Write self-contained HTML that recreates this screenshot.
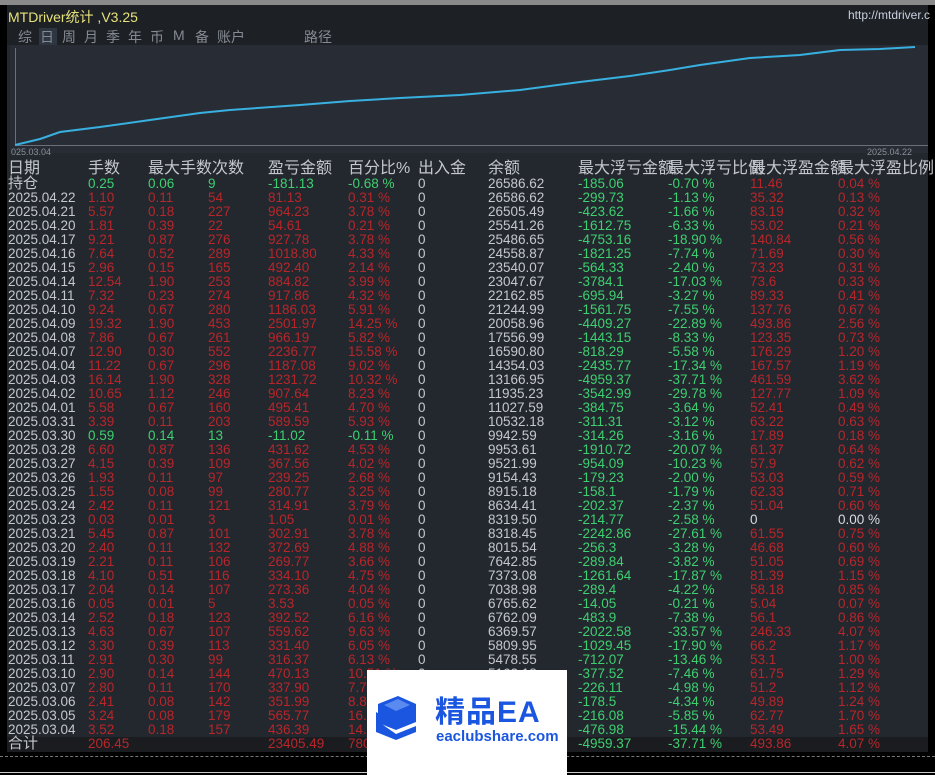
<!DOCTYPE html>
<html><head><meta charset="utf-8"><style>
*{margin:0;padding:0;box-sizing:border-box}
body{width:935px;height:775px;background:#000;position:relative;overflow:hidden;font-family:"Liberation Sans","Noto Sans CJK SC",sans-serif}
.abs{position:absolute}
#top{left:0;top:0;width:935px;height:5px;background:#8a8a8a}
#panel{left:7px;top:5px;width:921px;height:747px;background:#23272e}
#hdr{left:7px;top:5px;width:921px;height:40px;background:#1d2024}
#chart{left:10px;top:45px;width:918px;height:108px;background:#282d35}
.r{position:absolute;left:0;height:14px;line-height:14px;font-size:13.5px;white-space:nowrap;color:#c4c8ce}
.r span{position:absolute;top:0}
.a{left:8px}.b{left:88px}.c{left:148px}.d{left:208px}.e{left:268px}.f{left:348px}.g{left:418px}.h{left:488px}.i{left:578px}.j{left:668px}.k{left:750px}.l{left:838px}
.R .b,.R .c,.R .d,.R .e,.R .f{color:#b8262a}
.G .b,.G .c,.G .d,.G .e,.G .f{color:#3ed070}
.i,.j{color:#3ed070}
.k,.l{color:#b8262a}
.W .k,.W .l{color:#d8dce0}
.hd{color:#c4c8ce;font-size:16px}
.t{position:absolute;top:27px;color:#858b94;font-size:14px}
</style></head><body>
<div id="top" class="abs"></div>
<div id="panel" class="abs"></div>
<div id="hdr" class="abs"></div>
<div class="abs" style="left:8px;top:7px;color:#e6e27a;font-size:14px">MTDriver统计 ,V3.25</div>
<div class="abs" style="left:848px;top:8px;color:#c8d0e0;font-size:12px">http://mtdriver.c</div>
<div class="abs" style="left:39px;top:28px;width:18px;height:17px;background:#2e3642"></div>
<div class="t" style="left:18px">综</div><div class="t" style="left:40px">日</div><div class="t" style="left:62px">周</div><div class="t" style="left:84px">月</div><div class="t" style="left:106px">季</div><div class="t" style="left:128px">年</div><div class="t" style="left:150px">币</div><div class="t" style="left:173px">M</div><div class="t" style="left:195px">备</div><div class="t" style="left:217px">账户</div>
<div class="t" style="left:304px">路径</div>
<div id="chart" class="abs"></div>
<svg class="abs" style="left:0;top:0" width="935" height="160">
<line x1="15.5" y1="48" x2="15.5" y2="145" stroke="#6a7078" stroke-width="1"/>
<line x1="15" y1="145.5" x2="928" y2="145.5" stroke="#6a7078" stroke-width="1"/>
<polyline fill="none" stroke="#38b0e0" stroke-width="2" points="15,145 40,139 60,132 100,127 150,120 200,113 230,110 300,105 350,101 400,98 460,95 520,90 580,82 630,76 670,70 700,65 750,58 800,55 840,50 880,49 915,47"/>
</svg>
<div class="abs" style="left:11px;top:147px;color:#8a9098;font-size:9px">025.03.04</div>
<div class="abs" style="left:867px;top:147px;color:#8a9098;font-size:9px">2025.04.22</div>
<div class="abs" style="left:7px;top:737px;width:921px;height:15px;background:#1a1c20"></div>
<div class="r hd" style="top:162px"><span class="a">日期</span><span class="b">手数</span><span class="c">最大手数次数</span><span class="e">盈亏金额</span><span class="f">百分比%</span><span class="g">出入金</span><span class="h">余额</span><span class="i" style="color:#c4c8ce">最大浮亏金额</span><span class="j" style="color:#c4c8ce">最大浮亏比例</span><span class="k" style="color:#c4c8ce">最大浮盈金额</span><span class="l" style="color:#c4c8ce">最大浮盈比例</span></div>
<div class="r G" style="top:177px"><span class="a" style="font-size:15px">持仓</span><span class="b">0.25</span><span class="c">0.06</span><span class="d">9</span><span class="e">-181.13</span><span class="f">-0.68 %</span><span class="g">0</span><span class="h">26586.62</span><span class="i">-185.06</span><span class="j">-0.70 %</span><span class="k">11.46</span><span class="l">0.04 %</span></div>
<div class="r R" style="top:191px"><span class="a">2025.04.22</span><span class="b">1.10</span><span class="c">0.11</span><span class="d">54</span><span class="e">81.13</span><span class="f">0.31 %</span><span class="g">0</span><span class="h">26586.62</span><span class="i">-299.73</span><span class="j">-1.13 %</span><span class="k">35.32</span><span class="l">0.13 %</span></div>
<div class="r R" style="top:205px"><span class="a">2025.04.21</span><span class="b">5.57</span><span class="c">0.18</span><span class="d">227</span><span class="e">964.23</span><span class="f">3.78 %</span><span class="g">0</span><span class="h">26505.49</span><span class="i">-423.62</span><span class="j">-1.66 %</span><span class="k">83.19</span><span class="l">0.32 %</span></div>
<div class="r R" style="top:219px"><span class="a">2025.04.20</span><span class="b">1.81</span><span class="c">0.39</span><span class="d">22</span><span class="e">54.61</span><span class="f">0.21 %</span><span class="g">0</span><span class="h">25541.26</span><span class="i">-1612.75</span><span class="j">-6.33 %</span><span class="k">53.02</span><span class="l">0.21 %</span></div>
<div class="r R" style="top:233px"><span class="a">2025.04.17</span><span class="b">9.21</span><span class="c">0.87</span><span class="d">276</span><span class="e">927.78</span><span class="f">3.78 %</span><span class="g">0</span><span class="h">25486.65</span><span class="i">-4753.16</span><span class="j">-18.90 %</span><span class="k">140.84</span><span class="l">0.56 %</span></div>
<div class="r R" style="top:247px"><span class="a">2025.04.16</span><span class="b">7.64</span><span class="c">0.52</span><span class="d">289</span><span class="e">1018.80</span><span class="f">4.33 %</span><span class="g">0</span><span class="h">24558.87</span><span class="i">-1821.25</span><span class="j">-7.74 %</span><span class="k">71.69</span><span class="l">0.30 %</span></div>
<div class="r R" style="top:261px"><span class="a">2025.04.15</span><span class="b">2.96</span><span class="c">0.15</span><span class="d">165</span><span class="e">492.40</span><span class="f">2.14 %</span><span class="g">0</span><span class="h">23540.07</span><span class="i">-564.33</span><span class="j">-2.40 %</span><span class="k">73.23</span><span class="l">0.31 %</span></div>
<div class="r R" style="top:275px"><span class="a">2025.04.14</span><span class="b">12.54</span><span class="c">1.90</span><span class="d">253</span><span class="e">884.82</span><span class="f">3.99 %</span><span class="g">0</span><span class="h">23047.67</span><span class="i">-3784.1</span><span class="j">-17.03 %</span><span class="k">73.6</span><span class="l">0.33 %</span></div>
<div class="r R" style="top:289px"><span class="a">2025.04.11</span><span class="b">7.32</span><span class="c">0.23</span><span class="d">274</span><span class="e">917.86</span><span class="f">4.32 %</span><span class="g">0</span><span class="h">22162.85</span><span class="i">-695.94</span><span class="j">-3.27 %</span><span class="k">89.33</span><span class="l">0.41 %</span></div>
<div class="r R" style="top:303px"><span class="a">2025.04.10</span><span class="b">9.24</span><span class="c">0.67</span><span class="d">280</span><span class="e">1186.03</span><span class="f">5.91 %</span><span class="g">0</span><span class="h">21244.99</span><span class="i">-1561.75</span><span class="j">-7.55 %</span><span class="k">137.76</span><span class="l">0.67 %</span></div>
<div class="r R" style="top:317px"><span class="a">2025.04.09</span><span class="b">19.32</span><span class="c">1.90</span><span class="d">453</span><span class="e">2501.97</span><span class="f">14.25 %</span><span class="g">0</span><span class="h">20058.96</span><span class="i">-4409.27</span><span class="j">-22.89 %</span><span class="k">493.86</span><span class="l">2.56 %</span></div>
<div class="r R" style="top:331px"><span class="a">2025.04.08</span><span class="b">7.86</span><span class="c">0.67</span><span class="d">261</span><span class="e">966.19</span><span class="f">5.82 %</span><span class="g">0</span><span class="h">17556.99</span><span class="i">-1443.15</span><span class="j">-8.33 %</span><span class="k">123.35</span><span class="l">0.73 %</span></div>
<div class="r R" style="top:345px"><span class="a">2025.04.07</span><span class="b">12.90</span><span class="c">0.30</span><span class="d">552</span><span class="e">2236.77</span><span class="f">15.58 %</span><span class="g">0</span><span class="h">16590.80</span><span class="i">-818.29</span><span class="j">-5.58 %</span><span class="k">176.29</span><span class="l">1.20 %</span></div>
<div class="r R" style="top:359px"><span class="a">2025.04.04</span><span class="b">11.22</span><span class="c">0.67</span><span class="d">296</span><span class="e">1187.08</span><span class="f">9.02 %</span><span class="g">0</span><span class="h">14354.03</span><span class="i">-2435.77</span><span class="j">-17.34 %</span><span class="k">167.57</span><span class="l">1.19 %</span></div>
<div class="r R" style="top:373px"><span class="a">2025.04.03</span><span class="b">16.14</span><span class="c">1.90</span><span class="d">328</span><span class="e">1231.72</span><span class="f">10.32 %</span><span class="g">0</span><span class="h">13166.95</span><span class="i">-4959.37</span><span class="j">-37.71 %</span><span class="k">461.59</span><span class="l">3.62 %</span></div>
<div class="r R" style="top:387px"><span class="a">2025.04.02</span><span class="b">10.65</span><span class="c">1.12</span><span class="d">246</span><span class="e">907.64</span><span class="f">8.23 %</span><span class="g">0</span><span class="h">11935.23</span><span class="i">-3542.99</span><span class="j">-29.78 %</span><span class="k">127.77</span><span class="l">1.09 %</span></div>
<div class="r R" style="top:401px"><span class="a">2025.04.01</span><span class="b">5.58</span><span class="c">0.67</span><span class="d">160</span><span class="e">495.41</span><span class="f">4.70 %</span><span class="g">0</span><span class="h">11027.59</span><span class="i">-384.75</span><span class="j">-3.64 %</span><span class="k">52.41</span><span class="l">0.49 %</span></div>
<div class="r R" style="top:415px"><span class="a">2025.03.31</span><span class="b">3.39</span><span class="c">0.11</span><span class="d">203</span><span class="e">589.59</span><span class="f">5.93 %</span><span class="g">0</span><span class="h">10532.18</span><span class="i">-311.31</span><span class="j">-3.12 %</span><span class="k">63.22</span><span class="l">0.63 %</span></div>
<div class="r G" style="top:429px"><span class="a">2025.03.30</span><span class="b">0.59</span><span class="c">0.14</span><span class="d">13</span><span class="e">-11.02</span><span class="f">-0.11 %</span><span class="g">0</span><span class="h">9942.59</span><span class="i">-314.26</span><span class="j">-3.16 %</span><span class="k">17.89</span><span class="l">0.18 %</span></div>
<div class="r R" style="top:443px"><span class="a">2025.03.28</span><span class="b">6.60</span><span class="c">0.87</span><span class="d">136</span><span class="e">431.62</span><span class="f">4.53 %</span><span class="g">0</span><span class="h">9953.61</span><span class="i">-1910.72</span><span class="j">-20.07 %</span><span class="k">61.37</span><span class="l">0.64 %</span></div>
<div class="r R" style="top:457px"><span class="a">2025.03.27</span><span class="b">4.15</span><span class="c">0.39</span><span class="d">109</span><span class="e">367.56</span><span class="f">4.02 %</span><span class="g">0</span><span class="h">9521.99</span><span class="i">-954.09</span><span class="j">-10.23 %</span><span class="k">57.9</span><span class="l">0.62 %</span></div>
<div class="r R" style="top:471px"><span class="a">2025.03.26</span><span class="b">1.93</span><span class="c">0.11</span><span class="d">97</span><span class="e">239.25</span><span class="f">2.68 %</span><span class="g">0</span><span class="h">9154.43</span><span class="i">-179.23</span><span class="j">-2.00 %</span><span class="k">53.03</span><span class="l">0.59 %</span></div>
<div class="r R" style="top:485px"><span class="a">2025.03.25</span><span class="b">1.55</span><span class="c">0.08</span><span class="d">99</span><span class="e">280.77</span><span class="f">3.25 %</span><span class="g">0</span><span class="h">8915.18</span><span class="i">-158.1</span><span class="j">-1.79 %</span><span class="k">62.33</span><span class="l">0.71 %</span></div>
<div class="r R" style="top:499px"><span class="a">2025.03.24</span><span class="b">2.42</span><span class="c">0.11</span><span class="d">121</span><span class="e">314.91</span><span class="f">3.79 %</span><span class="g">0</span><span class="h">8634.41</span><span class="i">-202.37</span><span class="j">-2.37 %</span><span class="k">51.04</span><span class="l">0.60 %</span></div>
<div class="r R W" style="top:513px"><span class="a">2025.03.23</span><span class="b">0.03</span><span class="c">0.01</span><span class="d">3</span><span class="e">1.05</span><span class="f">0.01 %</span><span class="g">0</span><span class="h">8319.50</span><span class="i">-214.77</span><span class="j">-2.58 %</span><span class="k">0</span><span class="l">0.00 %</span></div>
<div class="r R" style="top:527px"><span class="a">2025.03.21</span><span class="b">5.45</span><span class="c">0.87</span><span class="d">101</span><span class="e">302.91</span><span class="f">3.78 %</span><span class="g">0</span><span class="h">8318.45</span><span class="i">-2242.86</span><span class="j">-27.61 %</span><span class="k">61.55</span><span class="l">0.75 %</span></div>
<div class="r R" style="top:541px"><span class="a">2025.03.20</span><span class="b">2.40</span><span class="c">0.11</span><span class="d">132</span><span class="e">372.69</span><span class="f">4.88 %</span><span class="g">0</span><span class="h">8015.54</span><span class="i">-256.3</span><span class="j">-3.28 %</span><span class="k">46.68</span><span class="l">0.60 %</span></div>
<div class="r R" style="top:555px"><span class="a">2025.03.19</span><span class="b">2.21</span><span class="c">0.11</span><span class="d">106</span><span class="e">269.77</span><span class="f">3.66 %</span><span class="g">0</span><span class="h">7642.85</span><span class="i">-289.84</span><span class="j">-3.82 %</span><span class="k">51.05</span><span class="l">0.69 %</span></div>
<div class="r R" style="top:569px"><span class="a">2025.03.18</span><span class="b">4.10</span><span class="c">0.51</span><span class="d">116</span><span class="e">334.10</span><span class="f">4.75 %</span><span class="g">0</span><span class="h">7373.08</span><span class="i">-1261.64</span><span class="j">-17.87 %</span><span class="k">81.39</span><span class="l">1.15 %</span></div>
<div class="r R" style="top:583px"><span class="a">2025.03.17</span><span class="b">2.04</span><span class="c">0.14</span><span class="d">107</span><span class="e">273.36</span><span class="f">4.04 %</span><span class="g">0</span><span class="h">7038.98</span><span class="i">-289.4</span><span class="j">-4.22 %</span><span class="k">58.18</span><span class="l">0.85 %</span></div>
<div class="r R" style="top:597px"><span class="a">2025.03.16</span><span class="b">0.05</span><span class="c">0.01</span><span class="d">5</span><span class="e">3.53</span><span class="f">0.05 %</span><span class="g">0</span><span class="h">6765.62</span><span class="i">-14.05</span><span class="j">-0.21 %</span><span class="k">5.04</span><span class="l">0.07 %</span></div>
<div class="r R" style="top:611px"><span class="a">2025.03.14</span><span class="b">2.52</span><span class="c">0.18</span><span class="d">123</span><span class="e">392.52</span><span class="f">6.16 %</span><span class="g">0</span><span class="h">6762.09</span><span class="i">-483.9</span><span class="j">-7.38 %</span><span class="k">56.1</span><span class="l">0.86 %</span></div>
<div class="r R" style="top:625px"><span class="a">2025.03.13</span><span class="b">4.63</span><span class="c">0.67</span><span class="d">107</span><span class="e">559.62</span><span class="f">9.63 %</span><span class="g">0</span><span class="h">6369.57</span><span class="i">-2022.58</span><span class="j">-33.57 %</span><span class="k">246.33</span><span class="l">4.07 %</span></div>
<div class="r R" style="top:639px"><span class="a">2025.03.12</span><span class="b">3.30</span><span class="c">0.39</span><span class="d">113</span><span class="e">331.40</span><span class="f">6.05 %</span><span class="g">0</span><span class="h">5809.95</span><span class="i">-1029.45</span><span class="j">-17.90 %</span><span class="k">66.2</span><span class="l">1.17 %</span></div>
<div class="r R" style="top:653px"><span class="a">2025.03.11</span><span class="b">2.91</span><span class="c">0.30</span><span class="d">99</span><span class="e">316.37</span><span class="f">6.13 %</span><span class="g">0</span><span class="h">5478.55</span><span class="i">-712.07</span><span class="j">-13.46 %</span><span class="k">53.1</span><span class="l">1.00 %</span></div>
<div class="r R" style="top:667px"><span class="a">2025.03.10</span><span class="b">2.90</span><span class="c">0.14</span><span class="d">144</span><span class="e">470.13</span><span class="f">10.51 %</span><span class="g">0</span><span class="h">5162.18</span><span class="i">-377.52</span><span class="j">-7.46 %</span><span class="k">61.75</span><span class="l">1.29 %</span></div>
<div class="r R" style="top:681px"><span class="a">2025.03.07</span><span class="b">2.80</span><span class="c">0.11</span><span class="d">170</span><span class="e">337.90</span><span class="f">7.71 %</span><span class="g">0</span><span class="h">4692.05</span><span class="i">-226.11</span><span class="j">-4.98 %</span><span class="k">51.2</span><span class="l">1.12 %</span></div>
<div class="r R" style="top:695px"><span class="a">2025.03.06</span><span class="b">2.41</span><span class="c">0.08</span><span class="d">142</span><span class="e">351.99</span><span class="f">8.80 %</span><span class="g">0</span><span class="h">4354.15</span><span class="i">-178.5</span><span class="j">-4.34 %</span><span class="k">49.89</span><span class="l">1.24 %</span></div>
<div class="r R" style="top:709px"><span class="a">2025.03.05</span><span class="b">3.24</span><span class="c">0.08</span><span class="d">179</span><span class="e">565.77</span><span class="f">16.49 %</span><span class="g">0</span><span class="h">4002.16</span><span class="i">-216.08</span><span class="j">-5.85 %</span><span class="k">62.77</span><span class="l">1.70 %</span></div>
<div class="r R" style="top:723px"><span class="a">2025.03.04</span><span class="b">3.52</span><span class="c">0.18</span><span class="d">157</span><span class="e">436.39</span><span class="f">14.58 %</span><span class="g">0</span><span class="h">3436.39</span><span class="i">-476.98</span><span class="j">-15.44 %</span><span class="k">53.49</span><span class="l">1.65 %</span></div>
<div class="r R" style="top:737px"><span class="a" style="font-size:15px">合计</span><span class="b">206.45</span><span class="e">23405.49</span><span class="f">780.16 %</span><span class="i">-4959.37</span><span class="j">-37.71 %</span><span class="k">493.86</span><span class="l">4.07 %</span></div>
<div class="abs" style="left:0;top:756px;width:935px;border-top:1px dashed #777"></div>
<div class="abs" style="left:0;top:772px;width:935px;height:1px;background:#ccc"></div>
<div class="abs" style="left:367px;top:670px;width:200px;height:105px;background:#fff"></div>
<svg class="abs" style="left:370px;top:690px" width="55" height="55" viewBox="0 0 55 55">
<path d="M6 30 L6 42 L26 50 L46 42 L46 36 L26 44 Z" fill="#1a56e0"/>
<path d="M6 22 L6 32 L26 40 L46 32 L46 26 L26 34 Z" fill="#1a56e0"/>
<path d="M8 14 L28 6 L46 14 L46 28 L26 36 L8 28 Z" fill="#1a56e0"/>
<path d="M14 15 L28 9 L40 15 L26 21 Z" fill="#5a8af0"/>
</svg>
<div class="abs" style="left:435px;top:687px;color:#1a56e0;font-size:30px;font-weight:bold;letter-spacing:1px">精品EA</div>
<div class="abs" style="left:436px;top:728px;color:#1a56e0;font-size:15px;font-weight:bold">eaclubshare.com</div>
</body></html>
